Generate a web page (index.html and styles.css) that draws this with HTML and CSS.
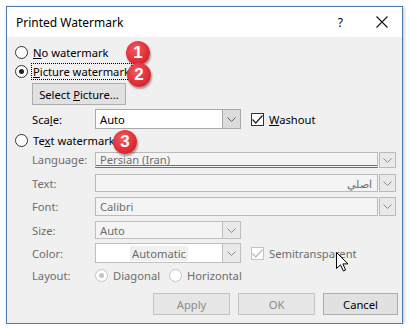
FILE: index.html
```html
<!DOCTYPE html>
<html>
<head>
<meta charset="utf-8">
<link rel="stylesheet" href="styles.css">
</head>
<body>
<div class="dialog">
  <div class="titlebar">
    <span class="title">Printed Watermark</span>
    <span class="help">?</span>
    <svg class="close" width="12" height="12" viewBox="0 0 12 12"><path d="M0.5 0.5 L11.5 11.5 M11.5 0.5 L0.5 11.5" stroke="#111" stroke-width="1.1" fill="none"/></svg>
  </div>
  <div class="content">
    <div class="row r1"><span class="radio"></span><span class="lbl"><u>N</u>o watermark</span></div>
    <div class="row r2"><span class="radio checked"></span><span class="lbl focus"><u>P</u>icture watermark</span></div>
    <div class="row r3"><button class="btn select">Select <u>P</u>icture...</button></div>
    <div class="row r4 field-row">
      <span class="flabel">Sca<u>l</u>e:</span>
      <div class="combo short"><span class="val">Auto</span><span class="arrow"><svg width="9" height="5" viewBox="0 0 9 5"><path d="M0.5 0.5 L4.5 4.5 L8.5 0.5" stroke="#606060" fill="none"/></svg></span></div>
      <span class="check checked"><svg width="11" height="9" viewBox="0 0 11 9"><path d="M0.5 4.5 L3.8 8 L10.5 0.5" stroke="#222" stroke-width="1.2" fill="none"/></svg></span>
      <span class="lbl"><u>W</u>ashout</span>
    </div>
    <div class="row r5"><span class="radio"></span><span class="lbl">Te<u>x</u>t watermark</span></div>
    <div class="row r6 field-row">
      <span class="flabel dis">Language:</span>
      <div class="wide-field lang"><span class="val dis">Persian (Iran)</span></div>
      <span class="abtn"><svg width="9" height="5" viewBox="0 0 9 5"><path d="M0.5 0.5 L4.5 4.5 L8.5 0.5" stroke="#8a8a8a" fill="none"/></svg></span>
    </div>
    <div class="row r7 field-row">
      <span class="flabel dis">Text:</span>
      <div class="wide-field txt"><span class="val dis rtl">اصلي</span></div>
      <span class="abtn"><svg width="9" height="5" viewBox="0 0 9 5"><path d="M0.5 0.5 L4.5 4.5 L8.5 0.5" stroke="#8a8a8a" fill="none"/></svg></span>
    </div>
    <div class="row r8 field-row">
      <span class="flabel dis">Font:</span>
      <div class="wide-field fnt"><span class="val dis">Calibri</span></div>
      <span class="abtn"><svg width="9" height="5" viewBox="0 0 9 5"><path d="M0.5 0.5 L4.5 4.5 L8.5 0.5" stroke="#8a8a8a" fill="none"/></svg></span>
    </div>
    <div class="row r9 field-row">
      <span class="flabel dis">Size:</span>
      <div class="combo short disabled"><span class="val dis">Auto</span><span class="arrow"><svg width="9" height="5" viewBox="0 0 9 5"><path d="M0.5 0.5 L4.5 4.5 L8.5 0.5" stroke="#8a8a8a" fill="none"/></svg></span></div>
    </div>
    <div class="row r10 field-row">
      <span class="flabel dis">Color:</span>
      <div class="combo short disabled color"><span class="val dis center"><span class="auto">Automatic</span></span><span class="arrow"><svg width="9" height="5" viewBox="0 0 9 5"><path d="M0.5 0.5 L4.5 4.5 L8.5 0.5" stroke="#8a8a8a" fill="none"/></svg></span></div>
      <span class="check dis-check"><svg width="11" height="9" viewBox="0 0 11 9"><path d="M0.5 4.5 L3.8 8 L10.5 0.5" stroke="#bcbcbc" stroke-width="1.2" fill="none"/></svg></span>
      <span class="lbl dis">Semitransparent</span>
    </div>
    <div class="row r11 field-row">
      <span class="flabel dis">Layout:</span>
      <span class="radio dis-radio checked-dis"></span><span class="lbl dis diag">Diagonal</span>
      <span class="radio dis-radio"></span><span class="lbl dis">Horizontal</span>
    </div>
    <div class="row r12 buttons">
      <button class="btn dbtn">Apply</button>
      <button class="btn dbtn">OK</button>
      <button class="btn cancel">Cancel</button>
    </div>
  </div>
  <span class="badge b1">1</span>
  <span class="badge b2">2</span>
  <span class="badge b3">3</span>
  <svg class="cursor" width="13" height="20" viewBox="0 0 13 20"><path d="M0.5 0.5 L0.5 16.5 L4.5 12.8 L7.3 19 L9.6 18 L6.9 11.9 L12 11.9 Z" fill="#fff" stroke="#000" stroke-width="1" stroke-linejoin="miter"/></svg>
</div>
</body>
</html>
```

FILE: styles.css
```css
html, body {
  margin: 0;
  padding: 0;
  background: #ffffff;
}
body {
  font-family: "Noto Sans", "Open Sans", sans-serif;
  font-size: 11.2px;
  color: #000;
}
u { text-decoration: underline; text-underline-offset: 1px; }
.dialog {
  position: relative;
  margin: 6px 0 0 6px;
  width: 397px;
  height: 318px;
  box-sizing: border-box;
  border: 1px solid #4d79ab;
  background: #f0f0f0;
  box-shadow: 1px 1px 3px rgba(0,0,0,0.25);
  display: flex;
  flex-direction: column;
}
.titlebar {
  height: 30px;
  background: #ffffff;
  display: flex;
  align-items: center;
  padding-left: 9px;
  flex: none;
}
.title { font-size: 12px; flex: 1; padding-top: 1px; }
.help { font-size: 12px; margin-right: 33px; }
.close { margin-right: 14px; }
.content {
  display: flex;
  flex-direction: column;
  padding-left: 8px;
}
.row { display: flex; align-items: center; flex: none; }
.r1 { margin-top: 6px; height: 19px; }
.r2 { height: 19px; }
.r3 { margin-top: 2px; height: 22px; padding-left: 17px; }
.r4 { margin-top: 4px; height: 20px; }
.r5 { margin-top: 2px; height: 19px; }
.r6 { margin-top: 2px; height: 17px; align-items: flex-start; }
.r7 { margin-top: 5px; height: 18px; }
.r8 { margin-top: 5px; height: 19px; }
.r9 { margin-top: 5px; height: 18px; }
.r10 { margin-top: 4px; height: 20px; }
.r11 { margin-top: 5px; height: 15px; }
.r12 { margin-top: 10px; height: 22px; }

.radio {
  width: 11px;
  height: 11px;
  border: 1px solid #333;
  border-radius: 50%;
  background: #fff;
  flex: none;
  position: relative;
}
.radio.checked::after {
  content: "";
  position: absolute;
  left: 3px; top: 3px;
  width: 5px; height: 5px;
  border-radius: 50%;
  background: #222;
}
.lbl { margin-left: 5px; white-space: nowrap; }
.focus { outline: 1px dotted #000; outline-offset: 0px; padding: 0 1px; margin-left: 4px; }
.btn {
  font-family: inherit;
  font-size: 11.2px;
  height: 22px;
  box-sizing: border-box;
  border: 1px solid #adadad;
  background: #e1e1e1;
  color: #000;
  padding: 0;
}
.select { width: 94px; }
.flabel { display: inline-block; width: 63px; padding-left: 17px; flex: none; }
.r6 .flabel { line-height: 15px; }
.dis { color: #6d6d6d; }
.combo {
  display: flex;
  height: 100%;
  box-sizing: border-box;
  border: 1px solid #a8a8a8;
  background: #fff;
}
.combo.short { width: 146px; }
.combo .val { flex: 1; padding-left: 4px; display: flex; align-items: center; }
.combo .arrow {
  width: 17px;
  border-left: 1px solid #a8a8a8;
  background: #dcdcdc;
  display: flex;
  align-items: center;
  justify-content: center;
}
.combo.disabled { border-color: #bfbfbf; }
.combo.disabled .arrow { border-left-color: #bfbfbf; background: #e9e9e9; }
.combo.disabled:not(.color) { background: #f4f4f4; }
.val.center { justify-content: center; padding-left: 0; }
.auto { background: #f0f0f0; padding: 0 2px; }
.check {
  width: 11px; height: 11px;
  border: 1px solid #333;
  background: #fff;
  margin-left: 10px;
  display: flex; align-items: center; justify-content: center;
  flex: none;
}
.dis-check { border-color: #c4c4c4; }
.wide-field {
  width: 283px;
  height: 100%;
  box-sizing: border-box;
  border: 1px solid #bababa;
  background: #f4f4f4;
  display: flex;
  align-items: center;
}
.wide-field .val { padding-left: 4px; flex: 1; }
.lang {
  height: 16px;
  border-bottom: 3px double #707070;
}
.lang .val { line-height: 13px; }
.wide-field .rtl { text-align: right; padding-right: 5px; padding-left: 0; }
.abtn {
  width: 17px;
  height: 100%;
  box-sizing: border-box;
  margin-left: 1px;
  border: 1px solid #bababa;
  background: #e9e9e9;
  display: flex;
  align-items: center;
  justify-content: center;
  flex: none;
}
.r6 .abtn { height: 16px; }
.dis-radio { border-color: #c4c4c4; background: #fff; }
.checked-dis::after {
  content: "";
  position: absolute;
  left: 3px; top: 3px;
  width: 5px; height: 5px;
  border-radius: 50%;
  background: #c4c4c4;
}
.diag { margin-right: 9px; }
.buttons { padding-left: 138px; gap: 8px; }
.buttons .btn { width: 77px; }
.dbtn { color: #8c8c8c; border-color: #c4c4c4; background: #e6e6e6; }
.cancel { width: 75px !important; }
.badge {
  position: absolute;
  width: 24px;
  height: 24px;
  border-radius: 50%;
  background: radial-gradient(circle at 40% 35%, #f25a5f, #d9252d 70%);
  box-shadow: 1px 2px 2px rgba(0,0,0,0.35);
  color: #fff;
  font-family: "Liberation Sans", Arial, sans-serif;
  font-weight: bold;
  font-size: 17px;
  line-height: 24px;
  text-align: center;
}
.b1 { left: 119px; top: 34px; }
.b2 { left: 120px; top: 56px; }
.b3 { left: 106px; top: 123px; }
.cursor { position: absolute; left: 329px; top: 245px; }
```
